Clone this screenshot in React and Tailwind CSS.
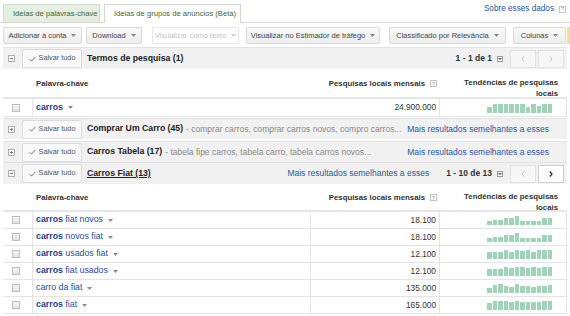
import React from 'react';

const font = "font-['Liberation_Sans',Arial,sans-serif]";

// small grey drop-down triangle used in buttons and keyword links
const Caret = ({ className = 'ml-[5px]' }) => (
  <svg width="5" height="3" viewBox="0 0 5 3" className={'inline-block shrink-0 ' + className}>
    <path d="M0 0h5L2.5 3z" fill="#8a8a8a" />
  </svg>
);

const Help = () => (
  <span className="inline-flex items-center justify-center w-[7px] h-[7px] border border-[#c4c4c4] text-[6px] leading-none text-[#9a9a9a] font-normal ml-[5px] align-middle">
    ?
  </span>
);

const Toggle = ({ open }) => (
  <svg width="7" height="7" viewBox="0 0 7 7" className="shrink-0">
    <rect x="0.5" y="0.5" width="6" height="6" fill="#fafafa" stroke="#b0b0b0" />
    <path d="M2 3.5h3" stroke="#888" />
    {!open && <path d="M3.5 2v3" stroke="#888" />}
  </svg>
);

const Check = () => (
  <span className="w-[8px] h-[8px] border border-[#bdbdbd] bg-gradient-to-b from-[#f6f6f6] to-[#e3e3e3]" />
);

const ToolButton = ({ w, children, disabled }) => (
  <button
    className={
      'h-[17px] flex items-center justify-center rounded-[2px] border text-[7.5px] ' +
      w +
      (disabled
        ? ' border-[#e6e6e6] bg-white text-[#c2c2c2]'
        : ' border-[#d9d9d9] bg-gradient-to-b from-[#f8f8f8] to-[#eeeeee] text-[#444]')
    }
  >
    {children}
    <Caret className={disabled ? 'ml-[5px] opacity-40' : 'ml-[5px]'} />
  </button>
);

const SaveAll = () => (
  <button className="ml-[7px] w-[60px] h-[19px] flex items-center justify-center gap-[3px] rounded-[2px] border border-[#dcdcdc] bg-[#f9f9f9] text-[7.3px] text-[#555]">
    <svg width="7" height="6" viewBox="0 0 7 6">
      <path d="M0.6 3.2l1.9 1.9L6.4 0.8" fill="none" stroke="#666" strokeWidth="0.9" />
    </svg>
    Salvar tudo
  </button>
);

const Pager = ({ label, nextActive }) => (
  <div className="flex items-center">
    <span className="text-[8.5px] font-bold text-[#333]">{label}</span>
    <span className="ml-[5px] w-[6px] h-[6px] border border-[#999] bg-white flex items-center justify-center">
      <svg width="4" height="2" viewBox="0 0 4 2"><path d="M0 0h4L2 2z" fill="#555" /></svg>
    </span>
    <span className="ml-[7px] w-[26px] h-[18px] border border-[#e2e2e2] bg-[#f7f7f7] flex items-center justify-center">
      <svg width="4" height="6" viewBox="0 0 4 6"><path d="M3.2 0.5L1 3l2.2 2.5" fill="none" stroke="#c0c0c0" /></svg>
    </span>
    <span
      className={
        'ml-[2px] w-[26px] h-[18px] border flex items-center justify-center ' +
        (nextActive ? 'border-[#d0d0d0] bg-white' : 'border-[#e2e2e2] bg-[#f7f7f7]')
      }
    >
      <svg width="4" height="6" viewBox="0 0 4 6">
        <path
          d="M0.8 0.5L3 3 0.8 5.5"
          fill="none"
          stroke={nextActive ? '#333' : '#c0c0c0'}
          strokeWidth={nextActive ? '1.3' : '1'}
        />
      </svg>
    </span>
  </div>
);

const More = ({ className = '' }) => (
  <span className={'text-[8.5px] text-[#2456a8] whitespace-nowrap ' + className}>
    Mais resultados semelhantes a esses
  </span>
);

const GroupRow = ({ open, title, desc, underline, right, className = '' }) => (
  <div className={'flex items-center h-[21px] bg-[#f1f1f1] border-t border-[#e3e3e3] pl-[5px] ' + className}>
    <Toggle open={open} />
    <SaveAll />
    <span className={'ml-[5px] text-[8.7px] font-bold text-[#222] whitespace-nowrap ' + (underline ? 'underline' : '')}>
      {title}
    </span>
    {desc && <span className="ml-[3px] text-[8.5px] text-[#8a8a8a] whitespace-nowrap">- {desc}</span>}
    <div className="ml-auto flex items-center">{right}</div>
  </div>
);

const cols = 'grid grid-cols-[30px_278px_129px_127px]';

const ColumnHeader = ({ className = '' }) => (
  <div className={cols + ' border-b-2 border-[#e6e6e6] text-[7.8px] font-bold text-[#333] ' + className}>
    <div />
    <div className="pl-[3px]">Palavra-chave</div>
    <div className="text-right pr-[3px]">
      Pesquisas locais mensais
      <Help />
    </div>
    <div className="text-right pr-[9px] leading-[11px] -mt-[1px]">
      Tendências de pesquisas
      <br />
      locais
    </div>
  </div>
);

const Bars = ({ data }) => (
  <div className="flex items-end gap-[1px] h-[10px]">
    {data.map((h, i) => (
      <div key={i} className="w-[4.5px] bg-[#a0d4b9]" style={{ height: h + 'px' }} />
    ))}
  </div>
);

const KeywordRow = ({ bold, rest, volume, bars, h = 'h-[17px]', midLine }) => (
  <div className={cols + ' ' + h + ' border-b border-[#e4e4e4] border-r'}>
    <div className="flex items-center justify-center border-r border-[#e4e4e4] pr-[3px]">
      <Check />
    </div>
    <div className={'flex items-center pl-[3px] text-[8.8px] text-[#1f4ea0] ' + (midLine ? 'border-r border-[#e4e4e4]' : '')}>
      {bold && <span className="font-bold text-[#1a3f8f]">{bold}</span>}
      {rest && <span>{bold ? '\u00a0' + rest : rest}</span>}
      <Caret className="ml-[5px]" />
    </div>
    <div className="flex items-center justify-end pr-[3px] text-[8.3px] text-[#333] border-r border-[#e4e4e4]">{volume}</div>
    <div className="flex items-center justify-end pr-[15px]">
      <Bars data={bars} />
    </div>
  </div>
);

const fiatRows = [
  { bold: 'carros', rest: 'fiat novos', volume: '18.100', bars: [4, 5, 5, 7, 7, 9, 4, 4, 4, 4, 7, 7] },
  { bold: 'carros', rest: 'novos fiat', volume: '18.100', bars: [4, 5, 5, 7, 7, 9, 4, 4, 4, 4, 7, 7] },
  { bold: 'carros', rest: 'usados fiat', volume: '12.100', bars: [7, 7, 7, 9, 7, 9, 8, 9, 7, 9, 9, 9] },
  { bold: 'carros', rest: 'fiat usados', volume: '12.100', bars: [7, 7, 7, 9, 8, 9, 9, 8, 9, 8, 9, 9] },
  { bold: null, rest: 'carro da fiat', volume: '135.000', bars: [5, 8, 9, 7, 6, 9, 7, 7, 6, 7, 7, 8] },
  { bold: 'carros', rest: 'fiat', volume: '165.000', bars: [7, 9, 9, 9, 8, 9, 8, 8, 8, 8, 9, 9] },
];

export default function App() {
  return (
    <div className={'w-[570px] h-[316px] overflow-hidden bg-white ' + font}>
      {/* Tabs */}
      <div className="flex items-end h-[23px] border-b border-[#d6dcd3] pl-[3px]">
        <div className="h-[18px] w-[97px] flex items-center pl-[9px] bg-[#e4eee1] border border-[#d3ded0] border-b-0 text-[7.6px] text-[#3b6a33] whitespace-nowrap">
          Ideias de palavras-chave
        </div>
        <div className="ml-[4px] h-[19px] w-[137px] flex items-center pl-[9px] bg-white border border-[#cdd9c9] border-b-0 -mb-px text-[7.6px] text-[#3b6a33] whitespace-nowrap">
          Ideias de grupos de anúncios (Beta)
        </div>
        <div className="ml-auto self-start mt-[3px] mr-[4px] flex items-center text-[8.2px] text-[#2456a8]">
          Sobre esses dados
          <Help />
        </div>
      </div>

      {/* Toolbar */}
      <div className="flex items-center h-[24px] pl-[3px] pt-[1px]">
        <ToolButton w="w-[80px]">Adicionar à conta</ToolButton>
        <div className="ml-[4px]">
          <ToolButton w="w-[56px]">Download</ToolButton>
        </div>
        <div className="ml-[10px]">
          <ToolButton w="w-[87px]" disabled>
            Visualizar como texto
          </ToolButton>
        </div>
        <div className="ml-[7px]">
          <ToolButton w="w-[134px]">Visualizar no Estimador de tráfego</ToolButton>
        </div>
        <div className="ml-[9px]">
          <ToolButton w="w-[117px]">Classificado por Relevância</ToolButton>
        </div>
        <div className="ml-[7px]">
          <ToolButton w="w-[53px]">Colunas</ToolButton>
        </div>
        <div className="ml-[1px] w-[3px] h-[17px] bg-[#f3dc9e]" />
      </div>

      {/* Table */}
      <div className="mx-[3px]">
        <GroupRow
          open
          title="Termos de pesquisa (1)"
          className="h-[22px]"
          right={
            <div className="mr-[3px]">
              <Pager label="1 - 1 de 1" />
            </div>
          }
        />
        <ColumnHeader className="h-[30px] pt-[9px]" />
        <KeywordRow
          bold="carros"
          volume="24.900.000"
          h="h-[18px]"
          bars={[6, 9, 9, 9, 9, 9, 9, 6, 9, 7, 9, 9]}
        />

        <GroupRow
          className="mt-[1px]"
          title="Comprar Um Carro (45)"
          desc="comprar carros, comprar carros novos, compro carros..."
          right={<More className="mr-[18px]" />}
        />
        <GroupRow
          className="mt-[2px]"
          title="Carros Tabela (17)"
          desc="tabela fipe carros, tabela carro, tabela carros novos..."
          right={<More className="mr-[18px]" />}
        />
        <GroupRow
          open
          underline
          title="Carros Fiat (13)"
          className="h-[22px]"
          right={
            <div className="flex items-center mr-[3px]">
              <More className="mr-[17px]" />
              <Pager label="1 - 10 de 13" nextActive />
            </div>
          }
        />
        <ColumnHeader className="h-[28px] pt-[8px]" />
        {fiatRows.map((r, i) => (
          <KeywordRow key={i} {...r} midLine />
        ))}
      </div>
    </div>
  );
}
